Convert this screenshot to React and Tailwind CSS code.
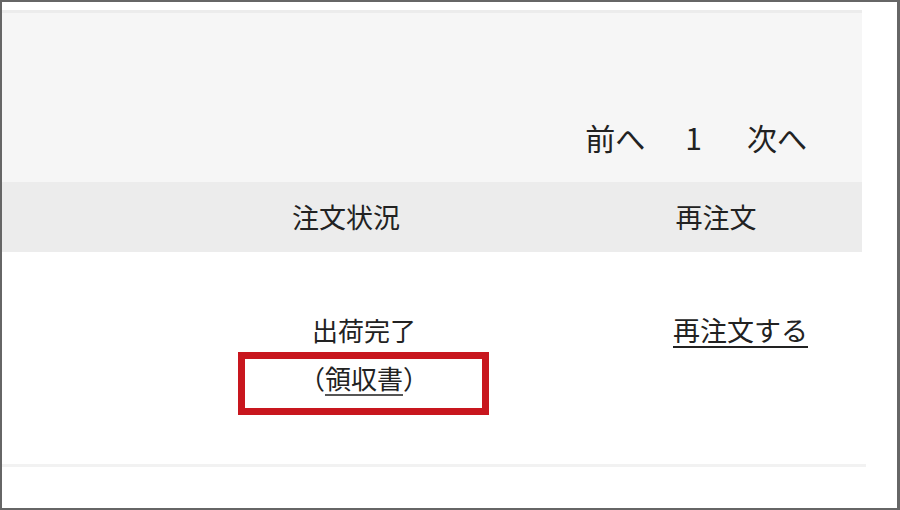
import React from "react";

const font = { fontFamily: '"Noto Sans CJK JP", "Noto Sans", sans-serif' };

const Pagination = () => (
  <div className="flex items-center justify-end pr-[55px] pt-[104px] text-[30px] leading-[40px] text-[#222]">
    <span>前へ</span>
    <span className="ml-[40px]">1</span>
    <span className="ml-[45px]">次へ</span>
  </div>
);

const App = () => {
  return (
    <div
      className="w-[900px] h-[510px] overflow-hidden bg-white border-l-2 border-t-2 border-r-[3px] border-b-[2px] border-[#666]"
      style={font}
    >
      <div className="w-[860px] pt-2">
        {/* Top panel with pager */}
        <div className="h-[172px] border-t-[3px] border-[#ececec] bg-[#f6f6f6]">
          <Pagination />
        </div>

        {/* Table header */}
        <div className="flex h-[70px] items-center bg-[#ececec] text-[27px] text-[#222]">
          <div className="w-[238px]"></div>
          <div className="w-[212px] text-center">注文状況</div>
          <div className="w-[150px]"></div>
          <div className="w-[228px] text-center">再注文</div>
        </div>

        {/* Order row */}
        <div className="relative flex h-[212px] pt-[54px] text-[26px] leading-[48px] text-[#222]">
          <div className="w-[256px]"></div>
          <div className="w-[212px] flex flex-col items-center">
            <p>出荷完了</p>
            <p>
              （<a className="underline decoration-[#555] underline-offset-[5px]">領収書</a>）
            </p>
          </div>
          <div className="w-[132px]"></div>
          <div className="w-[228px] pl-[71px]">
            <a className="underline decoration-2 underline-offset-[5px] text-[27px] whitespace-nowrap">
              再注文する
            </a>
          </div>

          {/* highlight */}
          <div className="absolute left-[236px] top-[100px] w-[251px] h-[63px] border-[7px] border-[#c8161e]"></div>
        </div>
      </div>
      <div className="w-[864px] h-[3px] bg-[#f2f2f2]"></div>
    </div>
  );
};

export default App;
